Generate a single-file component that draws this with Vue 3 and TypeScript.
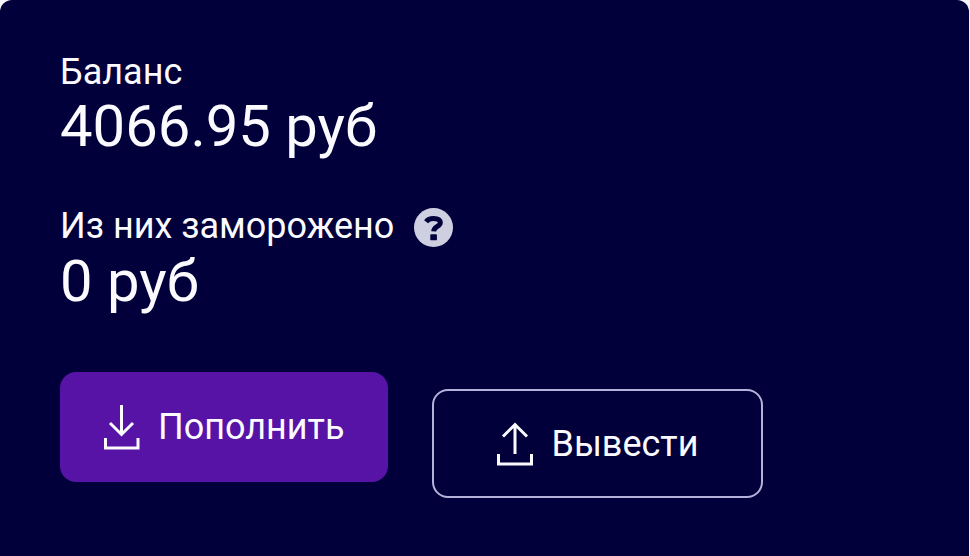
<script setup lang="ts">
interface Amount {
  label: string
  value: string
  hint?: string
}

const amounts: Amount[] = [
  { label: 'Баланс', value: '4066.95 руб' },
  { label: 'Из них заморожено', value: '0 руб', hint: 'Что такое замороженные средства' },
]
</script>

<template>
  <main class="card">
    <dl class="amounts">
      <div v-for="item in amounts" :key="item.label" class="amount">
        <dt class="label">
          <span>{{ item.label }}</span>
          <button v-if="item.hint" type="button" class="help" :aria-label="item.hint">
            <svg viewBox="0 0 40 40" aria-hidden="true">
              <circle cx="20" cy="20" r="20" fill="#cfcfe2" />
              <path
                d="M12.4 14C14.2 11.6 16.8 10.7 20 10.7C24.4 10.7 27 12.4 27 15.2C27 19.2 20.3 18.8 20.2 24"
                fill="none"
                stroke="#01003a"
                stroke-width="5.1"
              />
              <rect x="16.7" y="27" width="6.8" height="6.2" rx="1" fill="#01003a" />
            </svg>
          </button>
        </dt>
        <dd class="value">{{ item.value }}</dd>
      </div>
    </dl>

    <div class="actions">
      <button type="button" class="action deposit">
        <svg class="icon" viewBox="0 0 36 46" aria-hidden="true">
          <path d="M17.5 1V30M6 19L17.5 30.5L29 19M1.5 34V44H34V34" />
        </svg>
        <span>Пополнить</span>
      </button>
      <button type="button" class="action withdraw">
        <svg class="icon" viewBox="0 0 36 46" aria-hidden="true">
          <path d="M18 33V4M6 15.5L18 3.5L30 15.5M1.5 33V43H34.5V33" />
        </svg>
        <span>Вывести</span>
      </button>
    </div>
  </main>
</template>

<style>
body {
  background: #f4f4fa;
}
</style>

<style scoped>
.card {
  box-sizing: border-box;
  min-height: 100vh;
  margin-right: 1px;
  padding: 52px 60px 56px;
  border-radius: 12px 12px 0 0;
  background: #01003a;
  color: #fafaff;
  font-family: Roboto, "Liberation Sans", sans-serif;
  font-size: 36px;
  line-height: 40px;
}

.amounts {
  display: flex;
  flex-direction: column;
  gap: 44px;
  margin: 0;
}

.label {
  display: flex;
  align-items: center;
  gap: 20px;
}

.value {
  margin: 0;
  font-size: 58px;
  line-height: 68px;
}

.help {
  width: 39px;
  height: 39px;
  margin-top: 4px;
  padding: 0;
  border: 0;
  border-radius: 50%;
  background: none;
  cursor: pointer;
}

.help svg {
  display: block;
  width: 100%;
  height: 100%;
}

.actions {
  display: flex;
  flex-wrap: wrap;
  align-items: flex-start;
  gap: 44px;
  margin-top: 57px;
}

.action {
  display: flex;
  align-items: center;
  gap: 18px;
  box-sizing: border-box;
  height: 110px;
  border: 0;
  border-radius: 16px;
  color: inherit;
  font: inherit;
  cursor: pointer;
}

.deposit {
  padding: 0 44px;
  background: #5613a6;
}

.withdraw {
  height: 109px;
  margin-top: 17px;
  padding: 0 63px;
  border: 2px solid #b4b2da;
  background: transparent;
}

.icon {
  width: 36px;
  height: 46px;
  fill: none;
  stroke: currentColor;
  stroke-width: 3;
}
</style>
